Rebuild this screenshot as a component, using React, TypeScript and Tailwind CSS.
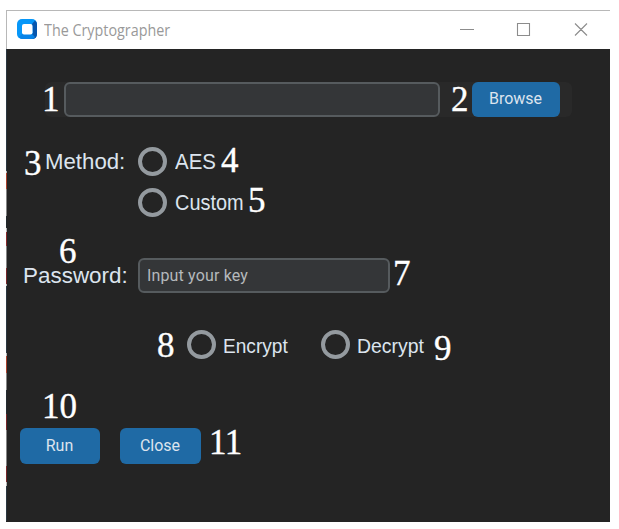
import type { ReactNode } from "react";

function Num({ children, className = "" }: { children: ReactNode; className?: string }) {
  return (
    <span className={`block h-[35px] shrink-0 whitespace-nowrap font-['Liberation_Serif',serif] text-[35px] leading-[35px] text-white [-webkit-text-stroke:0.35px_white] ${className}`}>
      {children}
    </span>
  );
}

function Radio({ className = "" }: { className?: string }) {
  return <span role="radio" aria-checked="false" className={`block size-[29px] shrink-0 rounded-full border-[4px] border-[#949a9f] ${className}`} />;
}

function Label({ children, className = "" }: { children: ReactNode; className?: string }) {
  return (
    <span className={`block shrink-0 origin-left whitespace-nowrap font-['Liberation_Sans',sans-serif] leading-[30px] text-[#dce4ee] ${className}`}>{children}</span>
  );
}

function Button({ children, className = "" }: { children: ReactNode; className?: string }) {
  return (
    <button className={`shrink-0 rounded-[6px] bg-[#1f6aa5] pb-px pr-px font-[Roboto,sans-serif] text-[16px] leading-5 text-[#dce4ee] ${className}`}>
      {children}
    </button>
  );
}

const edge: [number, string][] = [
  [122, "bg-[#2b3740]"],
  [2, "bg-[#b9b9b9]"],
  [16, "bg-[#a8402c]"],
  [27, "bg-[#858585]"],
  [12, "bg-[#22282c]"],
  [4, "bg-[#b9b9b9]"],
  [14, "bg-[#86292b]"],
  [22, "bg-[#858585]"],
  [16, "bg-[#76272a]"],
  [2, "bg-[#b9b9b9]"],
  [67, "bg-[#2b3740]"],
  [3, "bg-[#b9b9b9]"],
  [17, "bg-[#a8402c]"],
  [17, "bg-[#858585]"],
  [24, "bg-[#252c31]"],
  [16, "bg-[#76272a]"],
  [36, "bg-[#858585]"],
  [16, "bg-[#76272a]"],
  [4, "bg-[#b9b9b9]"],
  [35, "bg-[#2b3740]"],
];

export default function App() {
  return (
    <div className="h-[529px] w-[619px] overflow-hidden bg-white pl-[6px] pt-[10px]">
      <div className="flex h-[512px] w-[604px] flex-col">
        <header className="flex h-[39px] shrink-0 items-center border-l border-t border-[#b8b8b8] bg-white text-[#999]">
          <svg className="-mt-[2px] ml-[10px] shrink-0" width="20" height="20" viewBox="0 0 20 20">
            <rect width="20" height="20" rx="5" fill="#0797f8" />
            <path d="M15 5L18 1.5Q20 3 20 5V15Q20 20 15 20L14 16L16 14Z" fill="#0756ad" />
            <path d="M5 15H15L18 18Q17 20 15 20H5Q3 20 2 18Z" fill="#0784e8" />
            <rect x="5" y="5" width="10.5" height="10.5" rx="2" fill="white" />
          </svg>
          <h1 className="ml-[7px] w-[360px] origin-left scale-x-[0.925] whitespace-nowrap font-['Open_Sans',sans-serif] text-[15.5px] leading-5">The Cryptographer</h1>
          <svg className="-mt-[2px] ml-[56px] shrink-0" width="130" height="16" viewBox="0 0 130 16" fill="none" stroke="#8c8c8c" strokeWidth="1.1">
            <path d="M0 8.5H14M57.5 2.5H69.5V14.5H57.5ZM115 2.5L127 14.5M127 2.5L115 14.5" />
          </svg>
        </header>
        <div className="flex h-[473px] w-full bg-[#242424]">
          <div className="flex w-px shrink-0 flex-col">
            {edge.map(([height, color], i) => (
              <div key={i} className={`shrink-0 ${color}`} style={{ height }} />
            ))}
          </div>
          <main className="flex w-[603px] flex-col pt-[33px]">
            <div className="ml-[38px] flex h-[35px] w-[527px] items-center rounded-[6px] bg-[#292929]">
              <Num className="-ml-[3px] w-[22px]">1</Num>
              <div className="h-[35px] w-[376px] shrink-0 rounded-[6px] border-2 border-[#565b5e] bg-[#343638]" />
              <Num className="ml-[11px] w-[22px]">2</Num>
              <Button className="-ml-px h-[35px] w-[88px]">Browse</Button>
            </div>
            <div className="mt-[29px] flex h-[31px] items-center">
              <Num className="ml-[17px] mt-[4px] w-[21px]">3</Num>
              <Label className="w-[93px] scale-x-[1.01] text-[22px]">Method:</Label>
              <Radio />
              <Label className="ml-[8px] w-[46px] scale-x-[0.93] text-[22px]">AES</Label>
              <Num className="-mt-[2px]">4</Num>
            </div>
            <div className="mt-[10px] flex h-[31px] items-center">
              <Radio className="ml-[131px]" />
              <Label className="ml-[8px] w-[73px] scale-x-[0.905] text-[22px]">Custom</Label>
              <Num className="-mt-[4px]">5</Num>
            </div>
            <Num className="ml-[52px] mt-[16px]">6</Num>
            <div className="-mt-[11px] flex h-[35px] items-center">
              <Label className="ml-[16px] w-[115px] scale-x-[1.02] text-[22px]">Password:</Label>
              <div className="flex h-[35px] w-[252px] shrink-0 items-center rounded-[6px] border-2 border-[#565b5e] bg-[#343638] pl-[7px] font-[Roboto,sans-serif] text-[16px] tracking-[0.15px] text-[#b5b9bc]">Input your key</div>
              <Num className="ml-[3px] -mt-[4px]">7</Num>
            </div>
            <div className="mt-[36px] flex h-[31px] items-center">
              <Num className="ml-[150px] mt-[2px] w-[30px]">8</Num>
              <Radio />
              <Label className="ml-[7px] mt-[2px] w-[98px] scale-x-[0.91] text-[21px]">Encrypt</Label>
              <Radio />
              <Label className="ml-[7px] mt-[2px] w-[77px] scale-x-[0.925] text-[21px]">Decrypt</Label>
              <Num className="mt-[7px]">9</Num>
            </div>
            <Num className="ml-[35px] mt-[29px]">10</Num>
            <div className="mt-[4px] flex h-[36px] items-center">
              <Button className="ml-[13px] h-[36px] w-[80px]">Run</Button>
              <Button className="ml-[20px] h-[36px] w-[81px]">Close</Button>
              <Num className="ml-[8px] -mt-[8px] tracking-[-0.5px]">11</Num>
            </div>
          </main>
        </div>
      </div>
    </div>
  );
}
